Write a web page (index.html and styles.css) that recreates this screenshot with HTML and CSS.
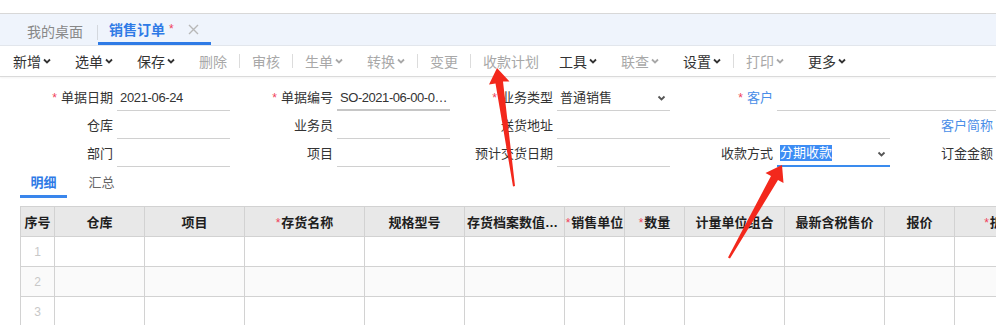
FILE: index.html
```html
<!DOCTYPE html>
<html>
  <head>
    <meta charset="utf-8">
    <title>销售订单</title>
    <link rel="stylesheet" href="styles.css">
  </head>
  <body>
    <div class="page">
      <div class="top"></div>

      <div class="tabs">
        <div class="tab">我的桌面</div>
        <div class="tab-sep"></div>
        <div class="tab active">销售订单<span class="dirty">*</span>
          <svg class="close" width="11" height="11" viewBox="0 0 11 11"><path d="M1 1L10 10M10 1L1 10"/></svg>
        </div>
      </div>

      <div class="toolbar">
        <div class="tool">新增<svg class="chev" viewBox="0 0 8 6"><path d="M1 1.5L4 4.5L7 1.5"/></svg></div>
        <div class="tool">选单<svg class="chev" viewBox="0 0 8 6"><path d="M1 1.5L4 4.5L7 1.5"/></svg></div>
        <div class="tool">保存<svg class="chev" viewBox="0 0 8 6"><path d="M1 1.5L4 4.5L7 1.5"/></svg></div>
        <div class="tool off">删除</div>
        <div class="sep"></div>
        <div class="tool off">审核</div>
        <div class="sep"></div>
        <div class="tool off">生单<svg class="chev" viewBox="0 0 8 6"><path d="M1 1.5L4 4.5L7 1.5"/></svg></div>
        <div class="tool off">转换<svg class="chev" viewBox="0 0 8 6"><path d="M1 1.5L4 4.5L7 1.5"/></svg></div>
        <div class="sep"></div>
        <div class="tool off">变更</div>
        <div class="sep"></div>
        <div class="tool off">收款计划</div>
        <div class="tool tight">工具<svg class="chev" viewBox="0 0 8 6"><path d="M1 1.5L4 4.5L7 1.5"/></svg></div>
        <div class="tool off">联查<svg class="chev" viewBox="0 0 8 6"><path d="M1 1.5L4 4.5L7 1.5"/></svg></div>
        <div class="tool">设置<svg class="chev" viewBox="0 0 8 6"><path d="M1 1.5L4 4.5L7 1.5"/></svg></div>
        <div class="sep"></div>
        <div class="tool off">打印<svg class="chev" viewBox="0 0 8 6"><path d="M1 1.5L4 4.5L7 1.5"/></svg></div>
        <div class="tool">更多<svg class="chev" viewBox="0 0 8 6"><path d="M1 1.5L4 4.5L7 1.5"/></svg></div>
      </div>

      <div class="form">
        <!-- row 1 -->
        <div class="field"><div class="label"><i>*</i>单据日期</div><div class="input value">2021-06-24</div></div>
        <div class="field"><div class="label"><i>*</i>单据编号</div><div class="input value readonly">SO-2021-06-00-0001</div></div>
        <div class="field"><div class="label"><i>*</i>业务类型</div><div class="input select">普通销售<svg class="chev" viewBox="0 0 8 6"><path d="M1 1.5L4 4.5L7 1.5"/></svg></div></div>
        <div class="field wide"><div class="label link"><i>*</i>客户</div><div class="input"></div></div>
        <!-- row 2 -->
        <div class="field"><div class="label">仓库</div><div class="input"></div></div>
        <div class="field"><div class="label">业务员</div><div class="input"></div></div>
        <div class="field wide"><div class="label">送货地址</div><div class="input"></div></div>
        <div class="field"><div class="label link">客户简称</div><div class="input"></div></div>
        <!-- row 3 -->
        <div class="field"><div class="label">部门</div><div class="input"></div></div>
        <div class="field"><div class="label">项目</div><div class="input"></div></div>
        <div class="field"><div class="label">预计交货日期</div><div class="input"></div></div>
        <div class="field"><div class="label">收款方式</div><div class="input select focus"><span class="picked">分期收款</span><svg class="chev" viewBox="0 0 8 6"><path d="M1 1.5L4 4.5L7 1.5"/></svg></div></div>
        <div class="field"><div class="label">订金金额</div><div class="input"></div></div>
      </div>

      <div class="subtabs">
        <div class="subtab current">明细</div>
        <div class="subtab">汇总</div>
      </div>

      <table class="grid">
        <colgroup>
          <col style="width:34px"><col style="width:90px"><col style="width:100px"><col style="width:120px">
          <col style="width:100px"><col style="width:100px"><col style="width:60px"><col style="width:60px">
          <col style="width:100px"><col style="width:100px"><col style="width:70px"><col style="width:104px">
        </colgroup>
        <thead>
          <tr>
            <th>序号</th><th>仓库</th><th>项目</th><th><i>*</i>存货名称</th>
            <th>规格型号</th><th>存货档案数值单位</th><th class="fit"><i>*</i>销售单位</th><th><i>*</i>数量</th>
            <th>计量单位组合</th><th>最新含税售价</th><th>报价</th><th><i>*</i>折扣率</th>
          </tr>
        </thead>
        <tbody>
          <tr><td class="num">1</td><td></td><td></td><td></td><td></td><td></td><td></td><td></td><td></td><td></td><td></td><td></td></tr>
          <tr class="odd"><td class="num">2</td><td></td><td></td><td></td><td></td><td></td><td></td><td></td><td></td><td></td><td></td><td></td></tr>
          <tr><td class="num">3</td><td></td><td></td><td></td><td></td><td></td><td></td><td></td><td></td><td></td><td></td><td></td></tr>
        </tbody>
      </table>

      <!-- red annotation arrows drawn over the page -->
      <svg class="marks" width="996" height="325" viewBox="0 0 996 325">
        <polygon points="497,68 509.5,81.5 503,81.5 515,186 513,186.5 495.5,83.5 489,84.5"/>
        <polygon points="782,165 783.5,183 778,180 730,258.5 728,257.5 771,176 765.5,173"/>
      </svg>
    </div>
  </body>
</html>
```

FILE: styles.css
```css
* {
  box-sizing: border-box;
}
body {
  margin: 0;
  background: #fff;
  color: #333;
  font-family: "Liberation Sans", "Noto Sans CJK SC", sans-serif;
  font-size: 14px;
}
.page {
  position: relative;
  width: 996px;
  height: 325px;
  overflow: hidden;
}
.top {
  height: 14px;
  border-bottom: 1px solid #d8d8d8;
}

/* window tabs */
.tabs {
  display: flex;
  height: 32px;
  padding-left: 13px;
  background: #eff4fc;
  border-bottom: 1px solid #e2e6ec;
}
.tab {
  display: flex;
  align-items: center;
  padding: 2px 14px 0 14px;
  color: #888;
  white-space: nowrap;
}
.tab-sep {
  width: 1px;
  height: 15px;
  margin-top: 11px;
  background: #d4d8de;
}
.tab.active {
  padding: 2px 12px 0 11px;
  color: #2f7be6;
  font-weight: bold;
  border-bottom: 3px solid #2f7be6;
}
.tab .dirty {
  margin-left: 4px;
  color: #f0405a;
  font-weight: normal;
  font-size: 12px;
}
.tab .close {
  margin-left: 14px;
  stroke: #b8b8b8;
  stroke-width: 1.4;
  fill: none;
}

/* toolbar */
.toolbar {
  display: flex;
  align-items: center;
  height: 31px;
  padding-left: 1px;
  border-bottom: 1px solid #dadada;
  box-shadow: 0 1px 2px rgba(0, 0, 0, 0.05);
}
.tool {
  display: flex;
  align-items: center;
  padding: 0 12px;
  color: #333;
  white-space: nowrap;
}
.tool.tight {
  margin-left: -4px;
}
.tool.off {
  color: #a8a8a8;
}
.chev {
  width: 8px;
  height: 6px;
  margin-left: 2px;
  fill: none;
  stroke: currentColor;
  stroke-width: 1.8;
}
.sep {
  width: 1px;
  height: 14px;
  background: #dcdcdc;
}

/* header form */
.form {
  display: grid;
  grid-template-columns: repeat(5, 220px);
  grid-auto-rows: 28px;
  padding-top: 8px;
  font-size: 13px;
}
.field {
  display: flex;
  width: 230px;
}
.field.wide {
  grid-column: span 2;
  width: 450px;
}
.label {
  flex: none;
  width: 113px;
  line-height: 26px;
  text-align: right;
  white-space: nowrap;
}
.label i {
  font-style: normal;
  font-size: 12px;
  color: #f0405a;
  margin-right: 4px;
}
.label.link {
  color: #4a8ee8;
}
.input {
  position: relative;
  flex: none;
  width: 113px;
  height: 26px;
  margin-left: 4px;
  padding-left: 3px;
  line-height: 26px;
  border-bottom: 1px solid #d0d0d0;
  white-space: nowrap;
  overflow: hidden;
  text-overflow: ellipsis;
}
.field.wide .input {
  width: 333px;
}
.value {
  letter-spacing: -0.35px;
}
.readonly {
  padding-right: 0;
  letter-spacing: -0.45px;
  border-bottom: 2px solid #c6c6c6;
}
.select .chev {
  position: absolute;
  right: 4px;
  top: 10px;
  width: 9px;
  height: 6px;
  color: #555;
}
.input.focus {
  border-bottom: 2px solid #3a8bee;
}
.picked {
  display: inline-block;
  line-height: 16px;
  vertical-align: 1px;
  background: #3c8cf4;
  color: #fff;
}

/* detail tabs */
.subtabs {
  display: flex;
  padding-left: 20px;
  font-size: 13px;
}
.subtab {
  width: 47px;
  padding-top: 2px;
  line-height: 24px;
  text-align: center;
  color: #666;
  border-bottom: 3px solid transparent;
}
.subtab + .subtab {
  margin-left: 11px;
}
.subtab.current {
  color: #2f7be6;
  font-weight: bold;
  border-bottom-color: #3a86ec;
}

/* detail grid */
.grid {
  margin: 8px 0 0 20px;
  border-collapse: collapse;
  table-layout: fixed;
  width: 1038px;
  font-size: 13px;
}
.grid th,
.grid td {
  height: 30px;
  padding: 0 2px;
  border: 1px solid #d2d2d2;
  white-space: nowrap;
  overflow: hidden;
  text-overflow: ellipsis;
}
.grid th {
  background: #e8e8e8;
  color: #1e1e1e;
  font-weight: bold;
  text-align: center;
}
.grid th i {
  font-style: normal;
  font-weight: normal;
  font-size: 12px;
  color: #f0405a;
  margin-right: 1px;
}
.grid th:first-child,
.grid th.fit {
  padding: 0;
  text-overflow: clip;
}
.grid tr.odd td {
  background: #fafafa;
}
.grid td.num {
  text-align: center;
  color: #c8c8c8;
  font-size: 12px;
}

/* annotations */
.marks {
  position: absolute;
  left: 0;
  top: 0;
  pointer-events: none;
}
.marks polygon {
  fill: #f3281c;
}
```
